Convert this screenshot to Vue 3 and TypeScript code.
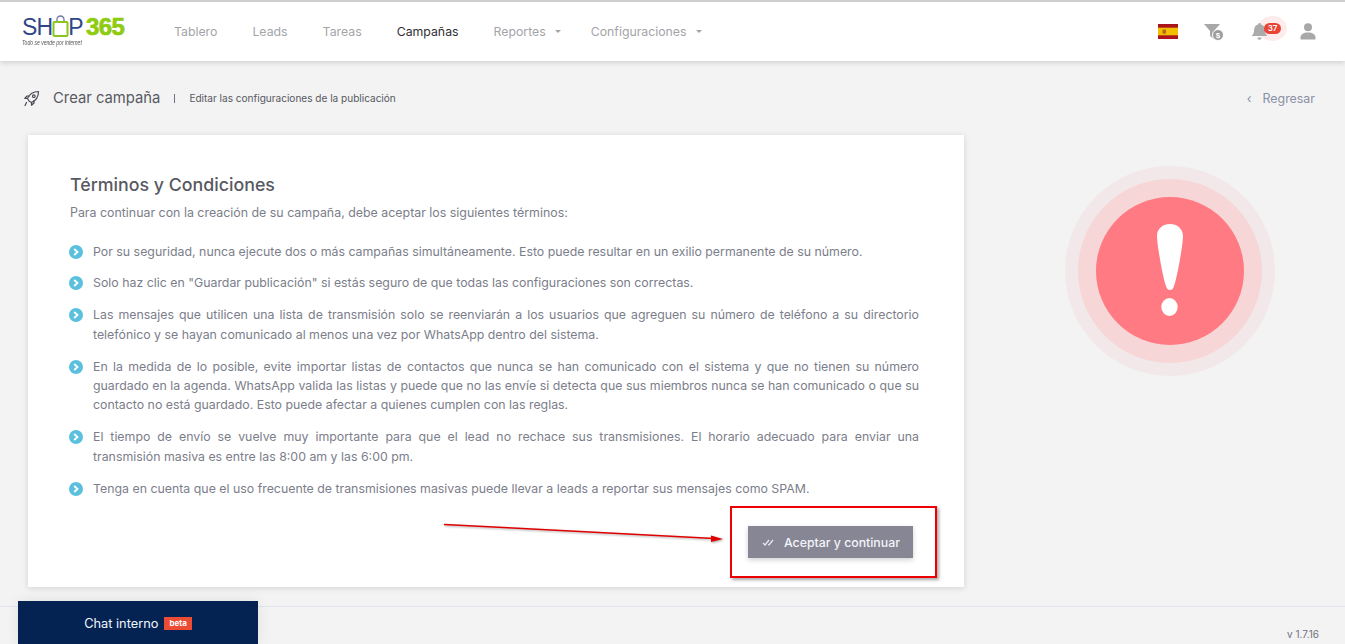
<script setup lang="ts">
const nav: { label: string; active?: boolean; caret?: boolean }[] = [
  { label: 'Tablero' },
  { label: 'Leads' },
  { label: 'Tareas' },
  { label: 'Campañas', active: true },
  { label: 'Reportes', caret: true },
  { label: 'Configuraciones', caret: true },
]
const terms: string[] = [
  'Por su seguridad, nunca ejecute dos o más campañas simultáneamente. Esto puede resultar en un exilio permanente de su número.',
  'Solo haz clic en "Guardar publicación" si estás seguro de que todas las configuraciones son correctas.',
  'Las mensajes que utilicen una lista de transmisión solo se reenviarán a los usuarios que agreguen su número de teléfono a su directorio telefónico y se hayan comunicado al menos una vez por WhatsApp dentro del sistema.',
  'En la medida de lo posible, evite importar listas de contactos que nunca se han comunicado con el sistema y que no tienen su número guardado en la agenda. WhatsApp valida las listas y puede que no las envíe si detecta que sus miembros nunca se han comunicado o que su contacto no está guardado. Esto puede afectar a quienes cumplen con las reglas.',
  'El tiempo de envío se vuelve muy importante para que el lead no rechace sus transmisiones. El horario adecuado para enviar una transmisión\u00a0masiva es entre las 8:00 am y las 6:00 pm.',
  'Tenga en cuenta que el uso frecuente de transmisiones masivas puede llevar a leads a reportar sus mensajes como SPAM.',
]
</script>

<template>
  <div class="page">
    <header class="topbar">
      <div class="logo">
        <div class="logo-row">
          <span class="logo-shop">SH</span>
          <svg class="logo-bag" width="17" height="24" viewBox="0 0 17 24">
            <path d="M5 9V5.500a3.500 3.500 0 0 1 7 0V9" fill="none" stroke="#6d7aa6" stroke-width="1.300" />
            <rect x="1.500" y="8" width="14" height="14" rx="1" fill="#fff" stroke="#8cc51d" stroke-width="2" />
          </svg>
          <span class="logo-shop">P</span>
          <span class="logo-num">365</span>
        </div>
        <div class="logo-tag">Todo se vende por internet</div>
      </div>
      <nav class="nav">
        <a v-for="n in nav" :key="n.label" class="nav-item" :class="{ active: n.active }">
          {{ n.label }}<span v-if="n.caret" class="caret"></span>
        </a>
      </nav>
      <div class="tools">
        <svg class="flag" width="20" height="15" viewBox="0 0 20 15">
          <rect width="20" height="15" fill="#aa151b" />
          <rect y="3.700" width="20" height="7.600" fill="#f1bf00" />
          <rect x="4.500" y="5.500" width="3.500" height="4.200" rx="1" fill="#b5651d" />
        </svg>
        <svg class="funnel" width="20" height="18" viewBox="0 0 20 18">
          <path d="M0 1h16l-6 7v8l-4-3V8z" fill="#a8a8a8" />
          <circle cx="14" cy="12" r="5.500" fill="#9c9c9c" stroke="#fff" stroke-width="1" />
          <text x="14" y="15" text-anchor="middle" class="funnel-s">$</text>
        </svg>
        <div class="bell">
          <span class="bell-halo"></span>
          <svg width="17" height="19" viewBox="0 0 17 19">
            <path d="M8.500 1a1.400 1.400 0 0 1 1.400 1.400c2.800.7 4 3 4 5.600 0 3 1 4.600 2.600 6H.5C2.100 12.600 3.100 11 3.100 8c0-2.600 1.200-4.900 4-5.600A1.400 1.400 0 0 1 8.500 1z" fill="#ababab" />
            <path d="M6.300 15.500h4.400a2.200 2.200 0 0 1-4.400 0z" fill="#ababab" />
          </svg>
          <span class="badge">37</span>
        </div>
        <svg class="user" width="16" height="17" viewBox="0 0 16 17">
          <circle cx="8" cy="4.200" r="4" fill="#a8a8a8" />
          <path d="M0.500 16.500v-2c0-3 3-5 7.500-5s7.500 2 7.500 5v2z" fill="#a8a8a8" />
        </svg>
      </div>
    </header>

    <div class="subheader">
      <svg class="rocket" width="17" height="17" viewBox="0 0 17 17" fill="none" stroke="#4a4a55" stroke-width="1.200" stroke-linejoin="round" stroke-linecap="round">
        <path d="M6 11 4.500 8.500C6.500 4 10 1.500 15.500 1.500 15.500 7 13 10.500 8.500 12.500z" />
        <circle cx="10.800" cy="6.200" r="1.300" />
        <path d="M4.500 8.500H1.800L4 6h2.500M8.500 12.500v2.700L11 13v-2.500M3.500 12.500l-1.500 3" />
      </svg>
      <span class="sub-title">Crear campaña</span>
      <span class="sub-sep"></span>
      <span class="sub-desc">Editar las configuraciones de la publicación</span>
      <a class="back"><span class="back-arrow">‹</span>Regresar</a>
    </div>

    <main class="content">
      <section class="card">
        <h2 class="card-title">Términos y Condiciones</h2>
        <p class="card-intro">Para continuar con la creación de su campaña, debe aceptar los siguientes términos:</p>
        <ul class="terms">
          <li v-for="t in terms" :key="t" class="term">
            <span class="bullet">
              <svg width="6" height="8" viewBox="0 0 6 8"><path d="M1.200 1 4.500 4 1.200 7" fill="none" stroke="#fff" stroke-width="1.800" /></svg>
            </span>
            <span class="term-text">{{ t }}</span>
          </li>
        </ul>
        <div class="actions">
          <button class="accept" type="button">
            <svg width="13" height="8" viewBox="0 0 13 8" fill="none" stroke="#e8e8ee" stroke-width="1.300">
              <path d="M1 5l2 2 4-5M6 6.500 7 7l4-5" />
            </svg>
            Aceptar y continuar
          </button>
        </div>
      </section>
      <aside class="alert-wrap">
        <div class="ring-outer">
          <div class="ring-mid">
            <div class="ring-inner">
              <svg class="bang" width="26" height="92" viewBox="0 0 26 92">
                <path d="M13 0c7 0 13 4.500 13 12 0 8-5.500 40-9 50-1 3-2 4-4 4s-3-1-4-4C5.500 52 0 20 0 12 0 4.500 6 0 13 0z" fill="#fff" />
                <ellipse cx="12.500" cy="83" rx="8.200" ry="9" fill="#fff" />
              </svg>
            </div>
          </div>
        </div>
      </aside>
    </main>

    <footer class="footer"><span class="version">v 1.7.16</span></footer>

    <div class="chat">Chat interno <span class="beta">beta</span></div>

    <div class="red-box"></div>
    <svg class="arrow" width="300" height="30" viewBox="0 0 300 30">
      <path d="M2 5.500 272 19.500" stroke="#e10000" stroke-width="1.500" />
      <path d="M269 16.500 281 20 269 23z" fill="#e10000" />
    </svg>
  </div>
</template>

<style>
html, body { margin: 0; overflow: hidden; background: #f3f3f3; }
</style>

<style scoped>
.page {
  position: relative;
  width: 1345px;
  height: 644px;
  overflow: hidden;
  display: flex;
  flex-direction: column;
  background: #f3f3f3;
  border-top: 2px solid #cfcfcf;
  box-sizing: border-box;
  font-family: Inter, "Open Sans", sans-serif;
  color: #575962;
}
.topbar {
  flex: 0 0 59px;
  display: flex;
  align-items: center;
  background: #fff;
  box-shadow: 0 1px 6px rgba(0, 0, 0, .18);
  position: relative;
  padding: 0 29px 0 22px;
}
.logo { width: 152px; margin-top: -1px; }
.logo-row { display: flex; align-items: flex-end; height: 22px; }
.logo-shop { font: 400 23px/22px "Liberation Sans", sans-serif; color: #2f4687; letter-spacing: -.8px; }
.logo-bag { margin: 0 -1px 0 0; }
.logo-num {
  font: 700 24px/22px "Liberation Sans", sans-serif; color: #8fcb12; letter-spacing: -.6px;
  margin: 0 0 0 3px; -webkit-text-stroke: .7px #8fcb12;
}
.logo-tag { font: italic 400 7px/8px "Liberation Sans", sans-serif; color: #555; transform: scaleX(.72); transform-origin: left; white-space: nowrap; margin-top: 1px; }
.nav { display: flex; align-items: center; gap: 35px; font-size: 12.300px; }
.nav-item { color: #a4a4a8; display: flex; align-items: center; }
.nav-item.active { color: #2f2f33; }
.caret {
  width: 0; height: 0; margin: -1px -5px 0 9px;
  border: 3px solid transparent; border-top: 3px solid #a4a4a8; border-bottom: 0;
}
.tools { margin-left: auto; display: flex; align-items: center; }
.flag { margin-right: 26px; }
.funnel { margin-right: 27px; }
.funnel-s { font: 700 8px "Liberation Sans", sans-serif; fill: #fff; }
.bell { position: relative; width: 17px; height: 19px; margin-right: 32px; }
.bell svg { position: relative; display: block; }
.bell-halo { position: absolute; left: 7px; top: -6px; width: 29px; height: 25px; border-radius: 50%; background: #fdeceb; }
.badge {
  position: absolute; left: 13px; top: 1px; width: 17px; height: 11px; border-radius: 6px;
  background: #ea4335; color: #fff; font-size: 8px; font-weight: 600; line-height: 11px; text-align: center;
}
.subheader {
  flex: 0 0 auto;
  display: flex;
  align-items: center;
  height: 18px;
  margin-top: 28px;
  padding: 0 30px 0 23px;
}
.sub-title { font-size: 14.800px; margin-left: 13px; color: #575962; }
.sub-sep { width: 1px; height: 9px; background: #6f7180; margin: 0 14px 0 14px; }
.sub-desc { font-size: 10.050px; color: #575962; }
.back { margin-left: auto; font-size: 12.400px; color: #8a90a6; }
.back-arrow { margin-right: 11px; }
.content { flex: 1; display: flex; align-items: flex-start; padding: 28px 0 0 28px; }
.card {
  width: 936px;
  height: 452px;
  box-sizing: border-box;
  display: flex;
  flex-direction: column;
  background: #fff;
  box-shadow: 0 1px 6px rgba(0, 0, 0, .14);
  padding: 38px 45px 29px 42px;
}
.card-title { margin: 0; font-size: 17.800px; line-height: 24px; font-weight: 500; color: #575962; }
.card-intro { margin: 7px 0 0; font-size: 12.400px; line-height: 18px; color: #7b7e8a; }
.terms { list-style: none; margin: 19.500px 0 0; padding: 0; }
.term { display: flex; margin-bottom: 12.700px; }
.bullet {
  flex: 0 0 14px; width: 14px; height: 14px; margin: 3px 10px 0 -1px; border-radius: 50%;
  background: #5bc0de; display: flex; align-items: center; justify-content: center;
}
.term-text { flex: 1; font-size: 12.350px; line-height: 19.300px; color: #7b7e8a; text-align: justify; }
.actions { display: flex; justify-content: flex-end; padding-right: 6px; margin-top: auto; }
.accept {
  width: 165px; height: 32px; border: 0; padding: 0 0 0 14px;
  display: flex; align-items: center; gap: 9px;
  background: #868695; color: #f4f4f8; font-family: inherit; font-size: 12.300px; font-weight: 500;
  box-shadow: 0 2px 5px rgba(0, 0, 0, .18);
}
.alert-wrap { margin: 31px 0 0 101px; }
.ring-outer, .ring-mid, .ring-inner { border-radius: 50%; display: flex; align-items: center; justify-content: center; }
.ring-outer { width: 210px; height: 210px; background: #f3e8e9; }
.ring-mid { width: 184px; height: 184px; background: #f6d6d6; }
.ring-inner { width: 148px; height: 148px; background: #ff7a83; }
.bang { margin-top: -2px; }
.footer {
  flex: 0 0 38px;
  box-sizing: border-box;
  border-top: 1px solid #e4e4f0;
  display: flex;
  justify-content: flex-end;
  padding: 21px 26px 0 0;
}
.version { font-size: 10px; color: #6f7180; }
.chat {
  position: absolute; left: 18px; bottom: 0; width: 240px; height: 43px; padding-top: 2px; box-sizing: border-box;
  display: flex; align-items: center; justify-content: center; gap: 6px;
  background: #042352; color: #f2f6ff; font-size: 12.800px;
  box-shadow: 0 0 14px rgba(0, 0, 0, .08);
}
.beta { background: #ec4b34; color: #fff; font-size: 8px; font-weight: 700; padding: 2px 5px; line-height: 9px; }
.red-box {
  position: absolute; left: 730px; top: 504px; width: 203px; height: 68px;
  border: 2px solid #ee0000; box-shadow: 2px 2px 3px rgba(0, 0, 0, .35);
}
.arrow { position: absolute; left: 442px; top: 517px; filter: drop-shadow(1px 1px 1px rgba(0,0,0,.35)); }
</style>
